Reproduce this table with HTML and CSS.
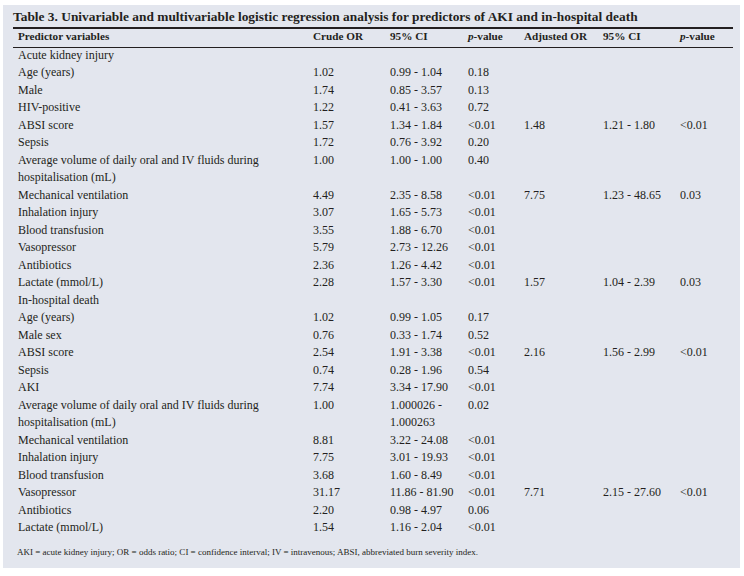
FILE: index.html
```html
<!DOCTYPE html>
<html lang="en">
<head>
<meta charset="utf-8">
<title>Table 3</title>
<link rel="stylesheet" href="styles.css">
</head>
<body>
<div class="panel">
  <div class="title">Table 3. Univariable and multivariable logistic regression analysis for predictors of AKI and in-hospital death</div>
  <div class="row head">
    <div>Predictor variables</div><div>Crude OR</div><div>95% CI</div><div><i>p</i>-value</div><div>Adjusted OR</div><div>95% CI</div><div><i>p</i>-value</div>
  </div>
  <div class="body">
    <div class="row"><div>Acute kidney injury</div><div></div><div></div><div></div><div></div><div></div><div></div></div>
    <div class="row"><div>Age (years)</div><div>1.02</div><div>0.99 - 1.04</div><div>0.18</div><div></div><div></div><div></div></div>
    <div class="row"><div>Male</div><div>1.74</div><div>0.85 - 3.57</div><div>0.13</div><div></div><div></div><div></div></div>
    <div class="row"><div>HIV-positive</div><div>1.22</div><div>0.41 - 3.63</div><div>0.72</div><div></div><div></div><div></div></div>
    <div class="row"><div>ABSI score</div><div>1.57</div><div>1.34 - 1.84</div><div>&lt;0.01</div><div>1.48</div><div>1.21 - 1.80</div><div>&lt;0.01</div></div>
    <div class="row"><div>Sepsis</div><div>1.72</div><div>0.76 - 3.92</div><div>0.20</div><div></div><div></div><div></div></div>
    <div class="row"><div>Average volume of daily oral and IV fluids during hospitalisation (mL)</div><div>1.00</div><div>1.00 - 1.00</div><div>0.40</div><div></div><div></div><div></div></div>
    <div class="row"><div>Mechanical ventilation</div><div>4.49</div><div>2.35 - 8.58</div><div>&lt;0.01</div><div>7.75</div><div>1.23 - 48.65</div><div>0.03</div></div>
    <div class="row"><div>Inhalation injury</div><div>3.07</div><div>1.65 - 5.73</div><div>&lt;0.01</div><div></div><div></div><div></div></div>
    <div class="row"><div>Blood transfusion</div><div>3.55</div><div>1.88 - 6.70</div><div>&lt;0.01</div><div></div><div></div><div></div></div>
    <div class="row"><div>Vasopressor</div><div>5.79</div><div>2.73 - 12.26</div><div>&lt;0.01</div><div></div><div></div><div></div></div>
    <div class="row"><div>Antibiotics</div><div>2.36</div><div>1.26 - 4.42</div><div>&lt;0.01</div><div></div><div></div><div></div></div>
    <div class="row"><div>Lactate (mmol/L)</div><div>2.28</div><div>1.57 - 3.30</div><div>&lt;0.01</div><div>1.57</div><div>1.04 - 2.39</div><div>0.03</div></div>
    <div class="row"><div>In-hospital death</div><div></div><div></div><div></div><div></div><div></div><div></div></div>
    <div class="row"><div>Age (years)</div><div>1.02</div><div>0.99 - 1.05</div><div>0.17</div><div></div><div></div><div></div></div>
    <div class="row"><div>Male sex</div><div>0.76</div><div>0.33 - 1.74</div><div>0.52</div><div></div><div></div><div></div></div>
    <div class="row"><div>ABSI score</div><div>2.54</div><div>1.91 - 3.38</div><div>&lt;0.01</div><div>2.16</div><div>1.56 - 2.99</div><div>&lt;0.01</div></div>
    <div class="row"><div>Sepsis</div><div>0.74</div><div>0.28 - 1.96</div><div>0.54</div><div></div><div></div><div></div></div>
    <div class="row"><div>AKI</div><div>7.74</div><div>3.34 - 17.90</div><div>&lt;0.01</div><div></div><div></div><div></div></div>
    <div class="row"><div>Average volume of daily oral and IV fluids during hospitalisation (mL)</div><div>1.00</div><div>1.000026 - 1.000263</div><div>0.02</div><div></div><div></div><div></div></div>
    <div class="row"><div>Mechanical ventilation</div><div>8.81</div><div>3.22 - 24.08</div><div>&lt;0.01</div><div></div><div></div><div></div></div>
    <div class="row"><div>Inhalation injury</div><div>7.75</div><div>3.01 - 19.93</div><div>&lt;0.01</div><div></div><div></div><div></div></div>
    <div class="row"><div>Blood transfusion</div><div>3.68</div><div>1.60 - 8.49</div><div>&lt;0.01</div><div></div><div></div><div></div></div>
    <div class="row"><div>Vasopressor</div><div>31.17</div><div>11.86 - 81.90</div><div>&lt;0.01</div><div>7.71</div><div>2.15 - 27.60</div><div>&lt;0.01</div></div>
    <div class="row"><div>Antibiotics</div><div>2.20</div><div>0.98 - 4.97</div><div>0.06</div><div></div><div></div><div></div></div>
    <div class="row"><div>Lactate (mmol/L)</div><div>1.54</div><div>1.16 - 2.04</div><div>&lt;0.01</div><div></div><div></div><div></div></div>
  </div>
  <div class="note">AKI = acute kidney injury; OR = odds ratio; CI = confidence interval; IV = intravenous; ABSI, abbreviated burn severity index.</div>
</div>
</body>
</html>
```

FILE: styles.css
```css
html, body {
  margin: 0;
  padding: 0;
  background: #ffffff;
}

body {
  font-family: "Liberation Serif", "Times New Roman", serif;
  color: #231f20;
}

.panel {
  box-sizing: border-box;
  margin: 5px 0 0 3px;
  width: 737px;
  height: 563px;
  background: #e3e6ee;
  padding: 4px 7px 0 10px;
}

.title {
  width: 720px;
  font-weight: bold;
  font-size: 13.4px;
  line-height: 16px;
  padding-bottom: 2px;
  border-bottom: 2px solid #231f20;
  white-space: nowrap;
}

.row {
  display: grid;
  grid-template-columns: 295px 77px 78px 56px 79px 77px 58px;
  width: 720px;
}

.row > div {
  padding-left: 5px;
  font-size: 12px;
  line-height: 17.5px;
}

.head {
  border-bottom: 1px solid #231f20;
}

.head > div {
  font-weight: bold;
  font-size: 11.2px;
  line-height: 13px;
  padding-top: 1px;
  padding-bottom: 4px;
  white-space: nowrap;
}

.body {
  margin-top: -1.5px;
}

.note {
  margin-top: 9.5px;
  padding-left: 4px;
  font-size: 9px;
  line-height: 12px;
}
```
